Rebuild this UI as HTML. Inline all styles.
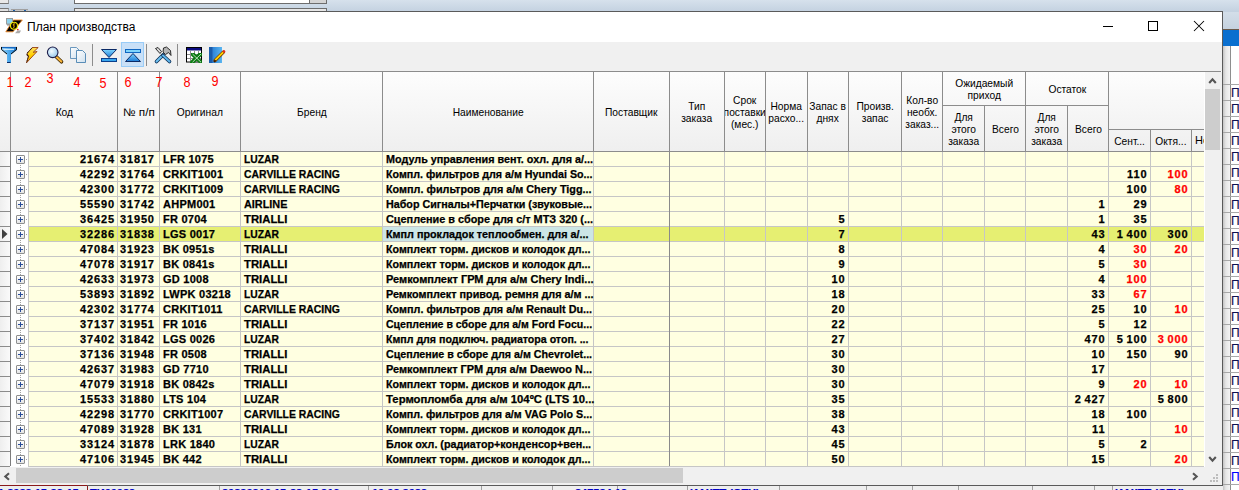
<!DOCTYPE html><html><head><meta charset="utf-8"><style>
*{margin:0;padding:0;box-sizing:border-box}
html,body{width:1239px;height:490px;overflow:hidden;background:#f0f0f0;font-family:"Liberation Sans",sans-serif}
.ab{position:absolute}
.t{position:absolute;white-space:pre;font-size:11px;line-height:14px;color:#000}
.b{font-weight:bold;-webkit-text-stroke:0.25px currentColor}
.hd{position:absolute;white-space:pre;font-size:11px;line-height:12px;color:#000;text-align:center;overflow:hidden;display:flex;align-items:center;justify-content:center}
.red{color:#ff0000}

</style></head><body>
<div class="ab" style="left:0;top:0;width:1239px;height:12px;background:linear-gradient(#d6e1ec,#c3d1e0)"></div>
<div class="ab" style="left:0;top:0;width:9px;height:4px;background:#e8e8e8;border-bottom:1px solid #777;border-right:1px solid #999"></div>
<div class="ab" style="left:0;top:8px;width:9px;height:4px;background:#e0e0e0;border-top:1px solid #777;border-right:1px solid #999"></div>
<div class="ab" style="left:74px;top:0;width:236px;height:4px;background:#fff;border:1px solid #6d6d6d;border-top:0"></div>
<div class="ab" style="left:310px;top:0;width:17px;height:4px;background:#d4d4d4;border-bottom:1px solid #6d6d6d;border-right:1px solid #6d6d6d"></div>
<div class="ab" style="left:74px;top:8px;width:253px;height:4px;background:#e6e6e6;border:1px solid #6d6d6d;border-bottom:0"></div>
<div class="ab" style="left:11px;top:9px;width:17px;height:3px;background:#c8c8c8;border-top:1px solid #a0a0a0"></div>
<div class="ab" style="left:13px;top:10px;width:2px;height:2px;background:#1d5fa8"></div>
<div class="ab" style="left:24px;top:10px;width:2px;height:2px;background:#1d5fa8"></div>
<div class="ab" style="left:1223px;top:12px;width:16px;height:478px;background:#f0f0f0"></div>
<div class="ab" style="left:1223px;top:12px;width:16px;height:17px;background:linear-gradient(#d3dee9,#c5d2df)"></div>
<div class="ab" style="left:1223px;top:29px;width:16px;height:1px;background:#6b5a4a"></div>
<div class="ab" style="left:1223px;top:30px;width:16px;height:16px;background:#0a6fcf"></div>
<div class="ab" style="left:1223px;top:46px;width:7px;height:444px;background:linear-gradient(90deg,#c4c4c4,#e6e6e6 40%,#f4f4f4)"></div>
<div class="ab" style="left:1230px;top:46px;width:1px;height:444px;background:#8e8e8e"></div>
<div class="ab" style="left:1231px;top:46px;width:8px;height:444px;background:#fff"></div>
<div class="ab" style="left:1223px;top:84px;width:16px;height:1px;background:#a8a8a8"></div>
<div class="t" style="left:1231px;top:85px;font-size:12px;line-height:16px;color:#101050;-webkit-text-stroke:0.2px #101050">П</div>
<div class="ab" style="left:1223px;top:100px;width:16px;height:1px;background:#a8a8a8"></div>
<div class="t" style="left:1231px;top:101px;font-size:12px;line-height:16px;color:#101050;-webkit-text-stroke:0.2px #101050">П</div>
<div class="ab" style="left:1223px;top:116px;width:16px;height:1px;background:#a8a8a8"></div>
<div class="t" style="left:1231px;top:117px;font-size:12px;line-height:16px;color:#101050;-webkit-text-stroke:0.2px #101050">П</div>
<div class="ab" style="left:1223px;top:132px;width:16px;height:1px;background:#a8a8a8"></div>
<div class="t" style="left:1231px;top:133px;font-size:12px;line-height:16px;color:#101050;-webkit-text-stroke:0.2px #101050">П</div>
<div class="ab" style="left:1223px;top:148px;width:16px;height:1px;background:#a8a8a8"></div>
<div class="t" style="left:1231px;top:149px;font-size:12px;line-height:16px;color:#101050;-webkit-text-stroke:0.2px #101050">П</div>
<div class="ab" style="left:1223px;top:164px;width:16px;height:1px;background:#a8a8a8"></div>
<div class="t" style="left:1231px;top:165px;font-size:12px;line-height:16px;color:#101050;-webkit-text-stroke:0.2px #101050">П</div>
<div class="ab" style="left:1223px;top:180px;width:16px;height:1px;background:#a8a8a8"></div>
<div class="t" style="left:1231px;top:181px;font-size:12px;line-height:16px;color:#101050;-webkit-text-stroke:0.2px #101050">П</div>
<div class="ab" style="left:1223px;top:196px;width:16px;height:1px;background:#a8a8a8"></div>
<div class="t" style="left:1231px;top:197px;font-size:12px;line-height:16px;color:#101050;-webkit-text-stroke:0.2px #101050">П</div>
<div class="ab" style="left:1223px;top:212px;width:16px;height:1px;background:#a8a8a8"></div>
<div class="t" style="left:1231px;top:213px;font-size:12px;line-height:16px;color:#101050;-webkit-text-stroke:0.2px #101050">П</div>
<div class="ab" style="left:1223px;top:228px;width:16px;height:1px;background:#a8a8a8"></div>
<div class="t" style="left:1231px;top:229px;font-size:12px;line-height:16px;color:#101050;-webkit-text-stroke:0.2px #101050">П</div>
<div class="ab" style="left:1223px;top:244px;width:16px;height:1px;background:#a8a8a8"></div>
<div class="t" style="left:1231px;top:245px;font-size:12px;line-height:16px;color:#101050;-webkit-text-stroke:0.2px #101050">П</div>
<div class="ab" style="left:1223px;top:260px;width:16px;height:1px;background:#a8a8a8"></div>
<div class="t" style="left:1231px;top:261px;font-size:12px;line-height:16px;color:#101050;-webkit-text-stroke:0.2px #101050">П</div>
<div class="ab" style="left:1223px;top:276px;width:16px;height:1px;background:#a8a8a8"></div>
<div class="t" style="left:1231px;top:277px;font-size:12px;line-height:16px;color:#101050;-webkit-text-stroke:0.2px #101050">П</div>
<div class="ab" style="left:1223px;top:292px;width:16px;height:1px;background:#a8a8a8"></div>
<div class="t" style="left:1231px;top:293px;font-size:12px;line-height:16px;color:#101050;-webkit-text-stroke:0.2px #101050">П</div>
<div class="ab" style="left:1223px;top:308px;width:16px;height:1px;background:#a8a8a8"></div>
<div class="t" style="left:1231px;top:309px;font-size:12px;line-height:16px;color:#101050;-webkit-text-stroke:0.2px #101050">П</div>
<div class="ab" style="left:1223px;top:324px;width:16px;height:1px;background:#a8a8a8"></div>
<div class="t" style="left:1231px;top:325px;font-size:12px;line-height:16px;color:#101050;-webkit-text-stroke:0.2px #101050">П</div>
<div class="ab" style="left:1223px;top:340px;width:16px;height:1px;background:#a8a8a8"></div>
<div class="t" style="left:1231px;top:341px;font-size:12px;line-height:16px;color:#101050;-webkit-text-stroke:0.2px #101050">П</div>
<div class="ab" style="left:1223px;top:356px;width:16px;height:1px;background:#a8a8a8"></div>
<div class="t" style="left:1231px;top:357px;font-size:12px;line-height:16px;color:#101050;-webkit-text-stroke:0.2px #101050">П</div>
<div class="ab" style="left:1223px;top:372px;width:16px;height:1px;background:#a8a8a8"></div>
<div class="t" style="left:1231px;top:373px;font-size:12px;line-height:16px;color:#101050;-webkit-text-stroke:0.2px #101050">П</div>
<div class="ab" style="left:1223px;top:388px;width:16px;height:1px;background:#a8a8a8"></div>
<div class="t" style="left:1231px;top:389px;font-size:12px;line-height:16px;color:#101050;-webkit-text-stroke:0.2px #101050">П</div>
<div class="ab" style="left:1223px;top:404px;width:16px;height:1px;background:#a8a8a8"></div>
<div class="t" style="left:1231px;top:405px;font-size:12px;line-height:16px;color:#101050;-webkit-text-stroke:0.2px #101050">П</div>
<div class="ab" style="left:1223px;top:420px;width:16px;height:1px;background:#a8a8a8"></div>
<div class="t" style="left:1231px;top:421px;font-size:12px;line-height:16px;color:#101050;-webkit-text-stroke:0.2px #101050">П</div>
<div class="ab" style="left:1223px;top:436px;width:16px;height:1px;background:#a8a8a8"></div>
<div class="t" style="left:1231px;top:437px;font-size:12px;line-height:16px;color:#101050;-webkit-text-stroke:0.2px #101050">П</div>
<div class="ab" style="left:1223px;top:452px;width:16px;height:1px;background:#a8a8a8"></div>
<div class="t" style="left:1231px;top:453px;font-size:12px;line-height:16px;color:#101050;-webkit-text-stroke:0.2px #101050">П</div>
<div class="ab" style="left:1223px;top:468px;width:16px;height:1px;background:#a8a8a8"></div>
<div class="t" style="left:1231px;top:469px;font-size:12px;line-height:16px;color:#0000ff;-webkit-text-stroke:0.2px #0000ff">П</div>
<div class="ab" style="left:1223px;top:484px;width:16px;height:1px;background:#a8a8a8"></div>
<div class="ab" style="left:0;top:485px;width:1223px;height:5px;background:#eeeeee"></div>
<div class="ab" style="left:87px;top:486px;width:1px;height:4px;background:#a0a0a0"></div>
<div class="ab" style="left:219px;top:486px;width:1px;height:4px;background:#a0a0a0"></div>
<div class="ab" style="left:368px;top:486px;width:1px;height:4px;background:#a0a0a0"></div>
<div class="ab" style="left:481px;top:486px;width:1px;height:4px;background:#a0a0a0"></div>
<div class="ab" style="left:552px;top:486px;width:1px;height:4px;background:#a0a0a0"></div>
<div class="ab" style="left:617px;top:486px;width:1px;height:4px;background:#a0a0a0"></div>
<div class="ab" style="left:687px;top:486px;width:1px;height:4px;background:#a0a0a0"></div>
<div class="ab" style="left:779px;top:486px;width:1px;height:4px;background:#a0a0a0"></div>
<div class="ab" style="left:866px;top:486px;width:1px;height:4px;background:#a0a0a0"></div>
<div class="ab" style="left:912px;top:486px;width:1px;height:4px;background:#a0a0a0"></div>
<div class="ab" style="left:958px;top:486px;width:1px;height:4px;background:#a0a0a0"></div>
<div class="ab" style="left:1032px;top:486px;width:1px;height:4px;background:#a0a0a0"></div>
<div class="ab" style="left:1094px;top:486px;width:1px;height:4px;background:#a0a0a0"></div>
<div class="ab" style="left:1112px;top:486px;width:1px;height:4px;background:#a0a0a0"></div>
<div class="ab" style="left:87px;top:485px;width:1px;height:5px;background:#8a1a1a"></div>
<div class="t b" style="left:-2px;top:486px;font-size:11px;line-height:14px;color:#0000c8">1.2023 15:23:15</div>
<div class="t b" style="left:90px;top:486px;font-size:11px;line-height:14px;color:#0000c8">ТИ00023</div>
<div class="t b" style="left:222px;top:486px;font-size:11px;line-height:14px;color:#0000c8">20230316 15:22:15 316</div>
<div class="t b" style="left:372px;top:486px;font-size:11px;line-height:14px;color:#0000c8">10.03.2023</div>
<div class="t b" style="left:575px;top:486px;font-size:11px;line-height:14px;color:#0000c8">247584.13</div>
<div class="t b" style="left:690px;top:486px;font-size:11px;line-height:14px;color:#0000c8">ИАКТТ (ОТЧ)</div>
<div class="t b" style="left:1115px;top:486px;font-size:11px;line-height:14px;color:#0000c8">ИАКТТ (ОТЧ)</div>
<div class="ab" style="left:0;top:485px;width:1223px;height:1px;background:#6a6a6a"></div>
<div class="ab" style="left:0;top:485px;width:87px;height:1px;background:#8a1a1a"></div>
<div class="ab" style="left:0;top:11px;width:1223px;height:475px;background:#fff;border:1px solid #5a5a5a;border-left:0"></div>
<div class="ab" style="left:0;top:485px;width:87px;height:1px;background:#8a1a1a"></div>
<div class="t" style="left:27px;top:19px;font-size:12px;line-height:16px;color:#000">План производства</div>
<div class="ab" style="left:1103px;top:26px;width:10px;height:1px;background:#000"></div>
<div class="ab" style="left:1148px;top:21px;width:10px;height:10px;border:1px solid #000"></div>
<svg class="ab" style="left:1193px;top:20px" width="12" height="12" viewBox="0 0 12 12"><path d="M1 1L11 11M11 1L1 11" stroke="#000" stroke-width="1.05"/></svg>
<div class="ab" style="left:0;top:42px;width:1222px;height:29px;background:#f0f0f0"></div>
<div class="ab" style="left:92px;top:44px;width:1px;height:22px;background:#8c8c8c"></div>
<div class="ab" style="left:146px;top:44px;width:1px;height:22px;background:#8c8c8c"></div>
<div class="ab" style="left:177px;top:44px;width:1px;height:22px;background:#8c8c8c"></div>
<div class="ab" style="left:121px;top:42px;width:23px;height:25px;background:#c9e0f7;border:1px solid #99ccf7"></div>

<svg class="ab" style="left:0;top:44px" width="230" height="22" viewBox="0 44 230 22">
 <defs>
  <linearGradient id="gb" x1="0" y1="0" x2="1" y2="0"><stop offset="0" stop-color="#9fd6fb"/><stop offset="0.5" stop-color="#4aa8ec"/><stop offset="1" stop-color="#1b73c9"/></linearGradient>
  <linearGradient id="gy" x1="0" y1="0" x2="0" y2="1"><stop offset="0" stop-color="#ffe060"/><stop offset="0.5" stop-color="#ffd000"/><stop offset="1" stop-color="#f0a000"/></linearGradient>
  <radialGradient id="gl" cx="0.4" cy="0.4" r="0.6"><stop offset="0" stop-color="#f4fbff"/><stop offset="1" stop-color="#9ccbec"/></radialGradient>
  <linearGradient id="gp" x1="0" y1="0" x2="1" y2="1"><stop offset="0" stop-color="#ffffff"/><stop offset="1" stop-color="#cfe0ee"/></linearGradient>
  <linearGradient id="gt" x1="0" y1="0" x2="0" y2="1"><stop offset="0" stop-color="#7fd6ff"/><stop offset="1" stop-color="#1b7ad6"/></linearGradient>
  <linearGradient id="gbk" x1="0" y1="0" x2="1" y2="0"><stop offset="0" stop-color="#1a5fb4"/><stop offset="0.3" stop-color="#2f86d8"/><stop offset="1" stop-color="#5ab5f0"/></linearGradient>
 </defs>
 <!-- funnel -->
 <path d="M1 47 H17 V50 L11 54.5 V63 H7 V54.5 L1 50 Z" fill="url(#gb)"/>
 <path d="M1 47.5 H17" stroke="#1466c0" stroke-width="1.2"/>
 <path d="M1.5 47 V49.5 L7 54 M16.5 47 V49.5 L11 54" fill="none" stroke="#0a0a0a" stroke-width="1"/>
 <path d="M3.5 49.3 H14" stroke="#eaf7ff" stroke-width="1"/>
 <path d="M7 62.5 H10.5" stroke="#0b2a66" stroke-width="1"/>
 <!-- lightning -->
 <path d="M32.3 47.5 H38.2 L33.2 52.3 L37 51.5 L26.5 62.8 L28.6 55.8 L27 55.5 L27.3 53 Z" fill="url(#gy)" stroke="#8a2a00" stroke-width="0.8" stroke-linejoin="round"/>
 <path d="M32.3 47.8 L27.3 53 L27 55.5 L28.6 55.8 L26.6 62.5" fill="none" stroke="#111" stroke-width="1" stroke-dasharray="1.2 0.8"/>
 <!-- magnifier -->
 <path d="M56.5 57 L61.5 61.8" stroke="#3a2400" stroke-width="3.6" stroke-linecap="round"/>
 <path d="M56.5 57 L61.3 61.5" stroke="#f9b53a" stroke-width="2.2" stroke-linecap="round"/>
 <circle cx="52.7" cy="52.3" r="5.3" fill="url(#gl)" stroke="#1d1d4a" stroke-width="1.1"/>
 <!-- copy -->
 <path d="M70.5 47.5 H76.5 L79.5 50.5 V58.5 H70.5 Z" fill="url(#gp)" stroke="#5b8db8" stroke-width="0.9"/>
 <path d="M76.5 50.5 H82.5 L85.5 53.5 V62.5 H76.5 Z" fill="url(#gp)" stroke="#4a82b0" stroke-width="0.9"/>
 <!-- collapse (down) -->
 <path d="M101.5 49.5 H116.5 L109 57.5 Z" fill="url(#gt)" stroke="#0b2a66" stroke-width="1" stroke-linejoin="round"/>
 <rect x="101.5" y="58.5" width="15" height="3" fill="#39a6ee" stroke="#0b3f8c" stroke-width="1"/>
 <!-- expand (up) -->
 <rect x="125.5" y="49.5" width="15" height="3" fill="#7fd4fb" stroke="#1166c0" stroke-width="1"/>
 <path d="M125.5 61.5 H140.5 L133 53.5 Z" fill="url(#gt)" stroke="#0b2a66" stroke-width="1" stroke-linejoin="round"/>
 <!-- tools -->
 <path d="M155.5 48.5 L158 47.5 L161.5 51.5 L160 53.5 Z" fill="#d8d8d8" stroke="#1a1a1a" stroke-width="0.9" stroke-linejoin="round"/>
 <path d="M163.5 48 L166.5 47 L170.5 50.5 L171 55.5 L168.5 52.5 L165.5 54.5 L163 52 Z" fill="#b4b4b4" stroke="#1a1a1a" stroke-width="0.9" stroke-linejoin="round"/>
 <path d="M156.5 61.5 L163 55" stroke="#0d2f57" stroke-width="3.6" stroke-linecap="round"/>
 <path d="M156.5 61.5 L163 55" stroke="#6ec3f2" stroke-width="2" stroke-linecap="round"/>
 <path d="M163 55.5 L169.5 61.5" stroke="#0d2f57" stroke-width="3.6" stroke-linecap="round"/>
 <path d="M163 55.5 L169.5 61.5" stroke="#5fb6ec" stroke-width="2" stroke-linecap="round"/>
 <!-- excel grid -->
 <rect x="186.5" y="47.5" width="15" height="14.5" fill="#fff" stroke="#000" stroke-width="1"/>
 <rect x="187" y="48" width="14" height="2.5" fill="#0a0a80"/>
 <path d="M187 54.5 H201 M187 58.5 H201 M190.5 50.5 V62 M194.5 50.5 V62 M198.5 50.5 V62" stroke="#8c8c8c" stroke-width="1"/>
 <path d="M191 53 L194.5 53 L202 60.5 L202 63 L199 63 L191 55.5 Z" fill="#0b7a12"/>
 <path d="M202 53 L202 55.5 L194.5 63 L190 63 L190 61.5 L198.5 53 Z" fill="#0b7a12"/>
 <path d="M192.5 54 L201 62.2 M201 54 L192.5 62.2" stroke="#e6f5e6" stroke-width="0.8"/>
 <!-- notebook -->
 <rect x="209" y="47" width="13" height="16" fill="url(#gbk)"/>
 <rect x="209" y="47" width="3" height="16" fill="#1a5cab"/>
 <rect x="212" y="47" width="1" height="16" fill="#2a6fc0"/>
 <path d="M215 60.5 L223.5 52" stroke="#7a3d00" stroke-width="3.2" stroke-linecap="round"/>
 <path d="M215.2 60.2 L223.3 52.2" stroke="#ffd400" stroke-width="1.8"/>
 <circle cx="224" cy="51.5" r="1.3" fill="#e82a1a"/>
 <path d="M214 62 L215.5 60.3" stroke="#3a1a00" stroke-width="1.4"/>
</svg>

<svg class="ab" style="left:4px;top:16px" width="20" height="20" viewBox="4 16 20 20">
 <path d="M13.3 20 L22.3 20 L13 31.8 L5.8 31.8 Z" fill="#000" stroke="#f08a2a" stroke-width="0.9" stroke-linejoin="round"/>
 <rect x="6.5" y="18.5" width="6" height="5.5" fill="#8fd3ee" stroke="#9a9a9a" stroke-width="1"/>
 <rect x="7" y="24.3" width="5" height="1.2" fill="#8a8a8a"/>
 <circle cx="14" cy="25.8" r="3.5" fill="#000" stroke="#f5ea00" stroke-width="1.1"/>
 <path d="M15.2 24 Q13.2 23.4 13.3 25 Q15 26 13.4 27.8" stroke="#e0a000" stroke-width="1.1" fill="none"/>
 <circle cx="17.8" cy="29.6" r="0.9" fill="#e22"/>
 <path d="M15 33.2 L17.5 30.6 H21 L19.5 33.2 Z" fill="#a8a8a8"/>
</svg>
<div class="ab" style="left:0;top:71px;width:1221px;height:1px;background:#8c8c8c"></div>
<div class="ab" style="left:0;top:72px;width:1204px;height:79px;background:linear-gradient(#fdfdfd,#efefef)"></div>
<div class="ab" style="left:0;top:151px;width:1204px;height:1px;background:#8c8c8c"></div>
<div class="ab" style="left:10px;top:72px;width:1px;height:79px;background:#8c8c8c"></div>
<div class="ab" style="left:117px;top:72px;width:1px;height:79px;background:#8c8c8c"></div>
<div class="ab" style="left:159px;top:72px;width:1px;height:79px;background:#8c8c8c"></div>
<div class="ab" style="left:240px;top:72px;width:1px;height:79px;background:#8c8c8c"></div>
<div class="ab" style="left:382px;top:72px;width:1px;height:79px;background:#8c8c8c"></div>
<div class="ab" style="left:593px;top:72px;width:1px;height:79px;background:#8c8c8c"></div>
<div class="ab" style="left:669px;top:72px;width:1px;height:79px;background:#8c8c8c"></div>
<div class="ab" style="left:724px;top:72px;width:1px;height:79px;background:#8c8c8c"></div>
<div class="ab" style="left:765px;top:72px;width:1px;height:79px;background:#8c8c8c"></div>
<div class="ab" style="left:807px;top:72px;width:1px;height:79px;background:#8c8c8c"></div>
<div class="ab" style="left:848px;top:72px;width:1px;height:79px;background:#8c8c8c"></div>
<div class="ab" style="left:901px;top:72px;width:1px;height:79px;background:#8c8c8c"></div>
<div class="ab" style="left:942px;top:72px;width:1px;height:79px;background:#8c8c8c"></div>
<div class="ab" style="left:1025px;top:72px;width:1px;height:79px;background:#8c8c8c"></div>
<div class="ab" style="left:1108px;top:72px;width:1px;height:79px;background:#8c8c8c"></div>
<div class="ab" style="left:984px;top:106px;width:1px;height:45px;background:#8c8c8c"></div>
<div class="ab" style="left:1067px;top:106px;width:1px;height:45px;background:#8c8c8c"></div>
<div class="ab" style="left:1150px;top:130px;width:1px;height:21px;background:#8c8c8c"></div>
<div class="ab" style="left:1191px;top:130px;width:1px;height:21px;background:#8c8c8c"></div>
<div class="ab" style="left:943px;top:105px;width:165px;height:1px;background:#8c8c8c"></div>
<div class="ab" style="left:1109px;top:129px;width:95px;height:1px;background:#8c8c8c"></div>
<div class="hd" style="left:11px;top:72px;width:106px;height:79px"><span style="display:inline-block;transform:scaleX(0.93)">Код</span></div>
<div class="hd" style="left:118px;top:72px;width:41px;height:79px"><span style="display:inline-block;transform:scaleX(1.07)">№ п/п</span></div>
<div class="hd" style="left:160px;top:72px;width:80px;height:79px"><span style="display:inline-block;transform:scaleX(0.93)">Оригинал</span></div>
<div class="hd" style="left:241px;top:72px;width:141px;height:79px"><span style="display:inline-block;transform:scaleX(0.93)">Бренд</span></div>
<div class="hd" style="left:383px;top:72px;width:210px;height:79px"><span style="display:inline-block;transform:scaleX(0.93)">Наименование</span></div>
<div class="hd" style="left:594px;top:72px;width:75px;height:79px"><span style="display:inline-block;transform:scaleX(0.93)">Поставщик</span></div>
<div class="hd" style="left:670px;top:72px;width:54px;height:79px"><span style="display:inline-block;transform:scaleX(0.93)">Тип
заказа</span></div>
<div class="hd" style="left:725px;top:72px;width:40px;height:79px"><span style="display:inline-block;transform:scaleX(0.93)">Срок
поставки
(мес.)</span></div>
<div class="hd" style="left:766px;top:72px;width:41px;height:79px"><span style="display:inline-block;transform:scaleX(0.93)">Норма
расхо...</span></div>
<div class="hd" style="left:808px;top:72px;width:40px;height:79px"><span style="display:inline-block;transform:scaleX(0.93)">Запас в
днях</span></div>
<div class="hd" style="left:849px;top:72px;width:52px;height:79px"><span style="display:inline-block;transform:scaleX(0.93)">Произв.
запас</span></div>
<div class="hd" style="left:902px;top:72px;width:40px;height:79px"><span style="display:inline-block;transform:scaleX(0.93)">Кол-во
необх.
заказ...</span></div>
<div class="hd" style="left:943px;top:72px;width:82px;height:33px"><span style="display:inline-block;transform:scaleX(0.93)">Ожидаемый
приход</span></div>
<div class="hd" style="left:1026px;top:72px;width:82px;height:33px"><span style="display:inline-block;transform:scaleX(0.93)">Остаток</span></div>
<div class="hd" style="left:943px;top:106px;width:41px;height:45px"><span style="display:inline-block;transform:scaleX(0.93)">Для
этого
заказа</span></div>
<div class="hd" style="left:985px;top:106px;width:40px;height:45px"><span style="display:inline-block;transform:scaleX(0.93)">Всего</span></div>
<div class="hd" style="left:1026px;top:106px;width:41px;height:45px"><span style="display:inline-block;transform:scaleX(0.93)">Для
этого
заказа</span></div>
<div class="hd" style="left:1068px;top:106px;width:40px;height:45px"><span style="display:inline-block;transform:scaleX(0.93)">Всего</span></div>
<div class="hd" style="left:1109px;top:130px;width:41px;height:21px"><span style="display:inline-block;transform:scaleX(0.93)">Сент...</span></div>
<div class="hd" style="left:1151px;top:130px;width:40px;height:21px"><span style="display:inline-block;transform:scaleX(0.93)">Октя...</span></div>
<div class="t" style="left:1195px;top:133px;width:9px;overflow:hidden">Но</div>
<div class="t" style="left:4.4px;width:12px;text-align:center;top:74px;font-size:14px;line-height:16px;color:#ff0000;transform:scaleX(0.9)">1</div>
<div class="t" style="left:22.1px;width:12px;text-align:center;top:74px;font-size:14px;line-height:16px;color:#ff0000;transform:scaleX(0.9)">2</div>
<div class="t" style="left:44.1px;width:12px;text-align:center;top:70px;font-size:14px;line-height:16px;color:#ff0000;transform:scaleX(0.9)">3</div>
<div class="t" style="left:70.7px;width:12px;text-align:center;top:74px;font-size:14px;line-height:16px;color:#ff0000;transform:scaleX(0.9)">4</div>
<div class="t" style="left:96.7px;width:12px;text-align:center;top:75px;font-size:14px;line-height:16px;color:#ff0000;transform:scaleX(0.9)">5</div>
<div class="t" style="left:121.7px;width:12px;text-align:center;top:74px;font-size:14px;line-height:16px;color:#ff0000;transform:scaleX(0.9)">6</div>
<div class="t" style="left:152.7px;width:12px;text-align:center;top:74px;font-size:14px;line-height:16px;color:#ff0000;transform:scaleX(0.9)">7</div>
<div class="t" style="left:181.0px;width:12px;text-align:center;top:74px;font-size:14px;line-height:16px;color:#ff0000;transform:scaleX(0.9)">8</div>
<div class="t" style="left:208.8px;width:12px;text-align:center;top:73px;font-size:14px;line-height:16px;color:#ff0000;transform:scaleX(0.9)">9</div>
<div class="ab" style="left:29px;top:152px;width:1175px;height:314px;background:#ffffe1"></div>
<div class="ab" style="left:11px;top:152px;width:17px;height:315px;background:#fff"></div>
<div class="ab" style="left:29px;top:227px;width:1175px;height:14px;background:#e6ef72"></div>
<div class="ab" style="left:383px;top:227px;width:210px;height:14px;background:#cce6e6"></div>
<div class="ab" style="left:0;top:152px;width:10px;height:14px;background:linear-gradient(90deg,#eeeeee,#fafafa)"></div>
<div class="ab" style="left:0px;top:166px;width:10px;height:1px;background:#8c8c8c"></div>
<div class="ab" style="left:28px;top:166px;width:1176px;height:1px;background:#c6c6c6"></div>
<div class="ab" style="left:16px;top:155px;width:9px;height:9px;border:1px solid #8e8f8f;border-radius:1px;background:linear-gradient(#ffffff,#e4e4e4)"></div>
<div class="ab" style="left:18px;top:159px;width:5px;height:1px;background:#2a4d9a"></div>
<div class="ab" style="left:20px;top:157px;width:1px;height:5px;background:#2a4d9a"></div>
<div class="ab" style="left:26px;top:159px;width:1px;height:1px;background:#a0a0a0"></div>
<div class="ab" style="left:0;top:167px;width:10px;height:14px;background:linear-gradient(90deg,#eeeeee,#fafafa)"></div>
<div class="ab" style="left:0px;top:181px;width:10px;height:1px;background:#8c8c8c"></div>
<div class="ab" style="left:28px;top:181px;width:1176px;height:1px;background:#c6c6c6"></div>
<div class="ab" style="left:16px;top:170px;width:9px;height:9px;border:1px solid #8e8f8f;border-radius:1px;background:linear-gradient(#ffffff,#e4e4e4)"></div>
<div class="ab" style="left:18px;top:174px;width:5px;height:1px;background:#2a4d9a"></div>
<div class="ab" style="left:20px;top:172px;width:1px;height:5px;background:#2a4d9a"></div>
<div class="ab" style="left:26px;top:174px;width:1px;height:1px;background:#a0a0a0"></div>
<div class="ab" style="left:20px;top:165px;width:1px;height:1px;background:#a0a0a0"></div>
<div class="ab" style="left:20px;top:167px;width:1px;height:1px;background:#a0a0a0"></div>
<div class="ab" style="left:20px;top:169px;width:1px;height:1px;background:#a0a0a0"></div>
<div class="ab" style="left:0;top:182px;width:10px;height:14px;background:linear-gradient(90deg,#eeeeee,#fafafa)"></div>
<div class="ab" style="left:0px;top:196px;width:10px;height:1px;background:#8c8c8c"></div>
<div class="ab" style="left:28px;top:196px;width:1176px;height:1px;background:#c6c6c6"></div>
<div class="ab" style="left:16px;top:185px;width:9px;height:9px;border:1px solid #8e8f8f;border-radius:1px;background:linear-gradient(#ffffff,#e4e4e4)"></div>
<div class="ab" style="left:18px;top:189px;width:5px;height:1px;background:#2a4d9a"></div>
<div class="ab" style="left:20px;top:187px;width:1px;height:5px;background:#2a4d9a"></div>
<div class="ab" style="left:26px;top:189px;width:1px;height:1px;background:#a0a0a0"></div>
<div class="ab" style="left:20px;top:180px;width:1px;height:1px;background:#a0a0a0"></div>
<div class="ab" style="left:20px;top:182px;width:1px;height:1px;background:#a0a0a0"></div>
<div class="ab" style="left:20px;top:184px;width:1px;height:1px;background:#a0a0a0"></div>
<div class="ab" style="left:0;top:197px;width:10px;height:14px;background:linear-gradient(90deg,#eeeeee,#fafafa)"></div>
<div class="ab" style="left:0px;top:211px;width:10px;height:1px;background:#8c8c8c"></div>
<div class="ab" style="left:28px;top:211px;width:1176px;height:1px;background:#c6c6c6"></div>
<div class="ab" style="left:16px;top:200px;width:9px;height:9px;border:1px solid #8e8f8f;border-radius:1px;background:linear-gradient(#ffffff,#e4e4e4)"></div>
<div class="ab" style="left:18px;top:204px;width:5px;height:1px;background:#2a4d9a"></div>
<div class="ab" style="left:20px;top:202px;width:1px;height:5px;background:#2a4d9a"></div>
<div class="ab" style="left:26px;top:204px;width:1px;height:1px;background:#a0a0a0"></div>
<div class="ab" style="left:20px;top:195px;width:1px;height:1px;background:#a0a0a0"></div>
<div class="ab" style="left:20px;top:197px;width:1px;height:1px;background:#a0a0a0"></div>
<div class="ab" style="left:20px;top:199px;width:1px;height:1px;background:#a0a0a0"></div>
<div class="ab" style="left:0;top:212px;width:10px;height:14px;background:linear-gradient(90deg,#eeeeee,#fafafa)"></div>
<div class="ab" style="left:0px;top:226px;width:10px;height:1px;background:#8c8c8c"></div>
<div class="ab" style="left:28px;top:226px;width:1176px;height:1px;background:#c6c6c6"></div>
<div class="ab" style="left:16px;top:215px;width:9px;height:9px;border:1px solid #8e8f8f;border-radius:1px;background:linear-gradient(#ffffff,#e4e4e4)"></div>
<div class="ab" style="left:18px;top:219px;width:5px;height:1px;background:#2a4d9a"></div>
<div class="ab" style="left:20px;top:217px;width:1px;height:5px;background:#2a4d9a"></div>
<div class="ab" style="left:26px;top:219px;width:1px;height:1px;background:#a0a0a0"></div>
<div class="ab" style="left:20px;top:210px;width:1px;height:1px;background:#a0a0a0"></div>
<div class="ab" style="left:20px;top:212px;width:1px;height:1px;background:#a0a0a0"></div>
<div class="ab" style="left:20px;top:214px;width:1px;height:1px;background:#a0a0a0"></div>
<div class="ab" style="left:0;top:227px;width:10px;height:14px;background:linear-gradient(90deg,#eeeeee,#fafafa)"></div>
<div class="ab" style="left:0px;top:241px;width:10px;height:1px;background:#8c8c8c"></div>
<div class="ab" style="left:28px;top:241px;width:1176px;height:1px;background:#c6c6c6"></div>
<div class="ab" style="left:16px;top:230px;width:9px;height:9px;border:1px solid #8e8f8f;border-radius:1px;background:linear-gradient(#ffffff,#e4e4e4)"></div>
<div class="ab" style="left:18px;top:234px;width:5px;height:1px;background:#2a4d9a"></div>
<div class="ab" style="left:20px;top:232px;width:1px;height:5px;background:#2a4d9a"></div>
<div class="ab" style="left:26px;top:234px;width:1px;height:1px;background:#a0a0a0"></div>
<div class="ab" style="left:20px;top:225px;width:1px;height:1px;background:#a0a0a0"></div>
<div class="ab" style="left:20px;top:227px;width:1px;height:1px;background:#a0a0a0"></div>
<div class="ab" style="left:20px;top:229px;width:1px;height:1px;background:#a0a0a0"></div>
<div class="ab" style="left:0;top:242px;width:10px;height:14px;background:linear-gradient(90deg,#eeeeee,#fafafa)"></div>
<div class="ab" style="left:0px;top:256px;width:10px;height:1px;background:#8c8c8c"></div>
<div class="ab" style="left:28px;top:256px;width:1176px;height:1px;background:#c6c6c6"></div>
<div class="ab" style="left:16px;top:245px;width:9px;height:9px;border:1px solid #8e8f8f;border-radius:1px;background:linear-gradient(#ffffff,#e4e4e4)"></div>
<div class="ab" style="left:18px;top:249px;width:5px;height:1px;background:#2a4d9a"></div>
<div class="ab" style="left:20px;top:247px;width:1px;height:5px;background:#2a4d9a"></div>
<div class="ab" style="left:26px;top:249px;width:1px;height:1px;background:#a0a0a0"></div>
<div class="ab" style="left:20px;top:240px;width:1px;height:1px;background:#a0a0a0"></div>
<div class="ab" style="left:20px;top:242px;width:1px;height:1px;background:#a0a0a0"></div>
<div class="ab" style="left:20px;top:244px;width:1px;height:1px;background:#a0a0a0"></div>
<div class="ab" style="left:0;top:257px;width:10px;height:14px;background:linear-gradient(90deg,#eeeeee,#fafafa)"></div>
<div class="ab" style="left:0px;top:271px;width:10px;height:1px;background:#8c8c8c"></div>
<div class="ab" style="left:28px;top:271px;width:1176px;height:1px;background:#c6c6c6"></div>
<div class="ab" style="left:16px;top:260px;width:9px;height:9px;border:1px solid #8e8f8f;border-radius:1px;background:linear-gradient(#ffffff,#e4e4e4)"></div>
<div class="ab" style="left:18px;top:264px;width:5px;height:1px;background:#2a4d9a"></div>
<div class="ab" style="left:20px;top:262px;width:1px;height:5px;background:#2a4d9a"></div>
<div class="ab" style="left:26px;top:264px;width:1px;height:1px;background:#a0a0a0"></div>
<div class="ab" style="left:20px;top:255px;width:1px;height:1px;background:#a0a0a0"></div>
<div class="ab" style="left:20px;top:257px;width:1px;height:1px;background:#a0a0a0"></div>
<div class="ab" style="left:20px;top:259px;width:1px;height:1px;background:#a0a0a0"></div>
<div class="ab" style="left:0;top:272px;width:10px;height:14px;background:linear-gradient(90deg,#eeeeee,#fafafa)"></div>
<div class="ab" style="left:0px;top:286px;width:10px;height:1px;background:#8c8c8c"></div>
<div class="ab" style="left:28px;top:286px;width:1176px;height:1px;background:#c6c6c6"></div>
<div class="ab" style="left:16px;top:275px;width:9px;height:9px;border:1px solid #8e8f8f;border-radius:1px;background:linear-gradient(#ffffff,#e4e4e4)"></div>
<div class="ab" style="left:18px;top:279px;width:5px;height:1px;background:#2a4d9a"></div>
<div class="ab" style="left:20px;top:277px;width:1px;height:5px;background:#2a4d9a"></div>
<div class="ab" style="left:26px;top:279px;width:1px;height:1px;background:#a0a0a0"></div>
<div class="ab" style="left:20px;top:270px;width:1px;height:1px;background:#a0a0a0"></div>
<div class="ab" style="left:20px;top:272px;width:1px;height:1px;background:#a0a0a0"></div>
<div class="ab" style="left:20px;top:274px;width:1px;height:1px;background:#a0a0a0"></div>
<div class="ab" style="left:0;top:287px;width:10px;height:14px;background:linear-gradient(90deg,#eeeeee,#fafafa)"></div>
<div class="ab" style="left:0px;top:301px;width:10px;height:1px;background:#8c8c8c"></div>
<div class="ab" style="left:28px;top:301px;width:1176px;height:1px;background:#c6c6c6"></div>
<div class="ab" style="left:16px;top:290px;width:9px;height:9px;border:1px solid #8e8f8f;border-radius:1px;background:linear-gradient(#ffffff,#e4e4e4)"></div>
<div class="ab" style="left:18px;top:294px;width:5px;height:1px;background:#2a4d9a"></div>
<div class="ab" style="left:20px;top:292px;width:1px;height:5px;background:#2a4d9a"></div>
<div class="ab" style="left:26px;top:294px;width:1px;height:1px;background:#a0a0a0"></div>
<div class="ab" style="left:20px;top:285px;width:1px;height:1px;background:#a0a0a0"></div>
<div class="ab" style="left:20px;top:287px;width:1px;height:1px;background:#a0a0a0"></div>
<div class="ab" style="left:20px;top:289px;width:1px;height:1px;background:#a0a0a0"></div>
<div class="ab" style="left:0;top:302px;width:10px;height:14px;background:linear-gradient(90deg,#eeeeee,#fafafa)"></div>
<div class="ab" style="left:0px;top:316px;width:10px;height:1px;background:#8c8c8c"></div>
<div class="ab" style="left:28px;top:316px;width:1176px;height:1px;background:#c6c6c6"></div>
<div class="ab" style="left:16px;top:305px;width:9px;height:9px;border:1px solid #8e8f8f;border-radius:1px;background:linear-gradient(#ffffff,#e4e4e4)"></div>
<div class="ab" style="left:18px;top:309px;width:5px;height:1px;background:#2a4d9a"></div>
<div class="ab" style="left:20px;top:307px;width:1px;height:5px;background:#2a4d9a"></div>
<div class="ab" style="left:26px;top:309px;width:1px;height:1px;background:#a0a0a0"></div>
<div class="ab" style="left:20px;top:300px;width:1px;height:1px;background:#a0a0a0"></div>
<div class="ab" style="left:20px;top:302px;width:1px;height:1px;background:#a0a0a0"></div>
<div class="ab" style="left:20px;top:304px;width:1px;height:1px;background:#a0a0a0"></div>
<div class="ab" style="left:0;top:317px;width:10px;height:14px;background:linear-gradient(90deg,#eeeeee,#fafafa)"></div>
<div class="ab" style="left:0px;top:331px;width:10px;height:1px;background:#8c8c8c"></div>
<div class="ab" style="left:28px;top:331px;width:1176px;height:1px;background:#c6c6c6"></div>
<div class="ab" style="left:16px;top:320px;width:9px;height:9px;border:1px solid #8e8f8f;border-radius:1px;background:linear-gradient(#ffffff,#e4e4e4)"></div>
<div class="ab" style="left:18px;top:324px;width:5px;height:1px;background:#2a4d9a"></div>
<div class="ab" style="left:20px;top:322px;width:1px;height:5px;background:#2a4d9a"></div>
<div class="ab" style="left:26px;top:324px;width:1px;height:1px;background:#a0a0a0"></div>
<div class="ab" style="left:20px;top:315px;width:1px;height:1px;background:#a0a0a0"></div>
<div class="ab" style="left:20px;top:317px;width:1px;height:1px;background:#a0a0a0"></div>
<div class="ab" style="left:20px;top:319px;width:1px;height:1px;background:#a0a0a0"></div>
<div class="ab" style="left:0;top:332px;width:10px;height:14px;background:linear-gradient(90deg,#eeeeee,#fafafa)"></div>
<div class="ab" style="left:0px;top:346px;width:10px;height:1px;background:#8c8c8c"></div>
<div class="ab" style="left:28px;top:346px;width:1176px;height:1px;background:#c6c6c6"></div>
<div class="ab" style="left:16px;top:335px;width:9px;height:9px;border:1px solid #8e8f8f;border-radius:1px;background:linear-gradient(#ffffff,#e4e4e4)"></div>
<div class="ab" style="left:18px;top:339px;width:5px;height:1px;background:#2a4d9a"></div>
<div class="ab" style="left:20px;top:337px;width:1px;height:5px;background:#2a4d9a"></div>
<div class="ab" style="left:26px;top:339px;width:1px;height:1px;background:#a0a0a0"></div>
<div class="ab" style="left:20px;top:330px;width:1px;height:1px;background:#a0a0a0"></div>
<div class="ab" style="left:20px;top:332px;width:1px;height:1px;background:#a0a0a0"></div>
<div class="ab" style="left:20px;top:334px;width:1px;height:1px;background:#a0a0a0"></div>
<div class="ab" style="left:0;top:347px;width:10px;height:14px;background:linear-gradient(90deg,#eeeeee,#fafafa)"></div>
<div class="ab" style="left:0px;top:361px;width:10px;height:1px;background:#8c8c8c"></div>
<div class="ab" style="left:28px;top:361px;width:1176px;height:1px;background:#c6c6c6"></div>
<div class="ab" style="left:16px;top:350px;width:9px;height:9px;border:1px solid #8e8f8f;border-radius:1px;background:linear-gradient(#ffffff,#e4e4e4)"></div>
<div class="ab" style="left:18px;top:354px;width:5px;height:1px;background:#2a4d9a"></div>
<div class="ab" style="left:20px;top:352px;width:1px;height:5px;background:#2a4d9a"></div>
<div class="ab" style="left:26px;top:354px;width:1px;height:1px;background:#a0a0a0"></div>
<div class="ab" style="left:20px;top:345px;width:1px;height:1px;background:#a0a0a0"></div>
<div class="ab" style="left:20px;top:347px;width:1px;height:1px;background:#a0a0a0"></div>
<div class="ab" style="left:20px;top:349px;width:1px;height:1px;background:#a0a0a0"></div>
<div class="ab" style="left:0;top:362px;width:10px;height:14px;background:linear-gradient(90deg,#eeeeee,#fafafa)"></div>
<div class="ab" style="left:0px;top:376px;width:10px;height:1px;background:#8c8c8c"></div>
<div class="ab" style="left:28px;top:376px;width:1176px;height:1px;background:#c6c6c6"></div>
<div class="ab" style="left:16px;top:365px;width:9px;height:9px;border:1px solid #8e8f8f;border-radius:1px;background:linear-gradient(#ffffff,#e4e4e4)"></div>
<div class="ab" style="left:18px;top:369px;width:5px;height:1px;background:#2a4d9a"></div>
<div class="ab" style="left:20px;top:367px;width:1px;height:5px;background:#2a4d9a"></div>
<div class="ab" style="left:26px;top:369px;width:1px;height:1px;background:#a0a0a0"></div>
<div class="ab" style="left:20px;top:360px;width:1px;height:1px;background:#a0a0a0"></div>
<div class="ab" style="left:20px;top:362px;width:1px;height:1px;background:#a0a0a0"></div>
<div class="ab" style="left:20px;top:364px;width:1px;height:1px;background:#a0a0a0"></div>
<div class="ab" style="left:0;top:377px;width:10px;height:14px;background:linear-gradient(90deg,#eeeeee,#fafafa)"></div>
<div class="ab" style="left:0px;top:391px;width:10px;height:1px;background:#8c8c8c"></div>
<div class="ab" style="left:28px;top:391px;width:1176px;height:1px;background:#c6c6c6"></div>
<div class="ab" style="left:16px;top:380px;width:9px;height:9px;border:1px solid #8e8f8f;border-radius:1px;background:linear-gradient(#ffffff,#e4e4e4)"></div>
<div class="ab" style="left:18px;top:384px;width:5px;height:1px;background:#2a4d9a"></div>
<div class="ab" style="left:20px;top:382px;width:1px;height:5px;background:#2a4d9a"></div>
<div class="ab" style="left:26px;top:384px;width:1px;height:1px;background:#a0a0a0"></div>
<div class="ab" style="left:20px;top:375px;width:1px;height:1px;background:#a0a0a0"></div>
<div class="ab" style="left:20px;top:377px;width:1px;height:1px;background:#a0a0a0"></div>
<div class="ab" style="left:20px;top:379px;width:1px;height:1px;background:#a0a0a0"></div>
<div class="ab" style="left:0;top:392px;width:10px;height:14px;background:linear-gradient(90deg,#eeeeee,#fafafa)"></div>
<div class="ab" style="left:0px;top:406px;width:10px;height:1px;background:#8c8c8c"></div>
<div class="ab" style="left:28px;top:406px;width:1176px;height:1px;background:#c6c6c6"></div>
<div class="ab" style="left:16px;top:395px;width:9px;height:9px;border:1px solid #8e8f8f;border-radius:1px;background:linear-gradient(#ffffff,#e4e4e4)"></div>
<div class="ab" style="left:18px;top:399px;width:5px;height:1px;background:#2a4d9a"></div>
<div class="ab" style="left:20px;top:397px;width:1px;height:5px;background:#2a4d9a"></div>
<div class="ab" style="left:26px;top:399px;width:1px;height:1px;background:#a0a0a0"></div>
<div class="ab" style="left:20px;top:390px;width:1px;height:1px;background:#a0a0a0"></div>
<div class="ab" style="left:20px;top:392px;width:1px;height:1px;background:#a0a0a0"></div>
<div class="ab" style="left:20px;top:394px;width:1px;height:1px;background:#a0a0a0"></div>
<div class="ab" style="left:0;top:407px;width:10px;height:14px;background:linear-gradient(90deg,#eeeeee,#fafafa)"></div>
<div class="ab" style="left:0px;top:421px;width:10px;height:1px;background:#8c8c8c"></div>
<div class="ab" style="left:28px;top:421px;width:1176px;height:1px;background:#c6c6c6"></div>
<div class="ab" style="left:16px;top:410px;width:9px;height:9px;border:1px solid #8e8f8f;border-radius:1px;background:linear-gradient(#ffffff,#e4e4e4)"></div>
<div class="ab" style="left:18px;top:414px;width:5px;height:1px;background:#2a4d9a"></div>
<div class="ab" style="left:20px;top:412px;width:1px;height:5px;background:#2a4d9a"></div>
<div class="ab" style="left:26px;top:414px;width:1px;height:1px;background:#a0a0a0"></div>
<div class="ab" style="left:20px;top:405px;width:1px;height:1px;background:#a0a0a0"></div>
<div class="ab" style="left:20px;top:407px;width:1px;height:1px;background:#a0a0a0"></div>
<div class="ab" style="left:20px;top:409px;width:1px;height:1px;background:#a0a0a0"></div>
<div class="ab" style="left:0;top:422px;width:10px;height:14px;background:linear-gradient(90deg,#eeeeee,#fafafa)"></div>
<div class="ab" style="left:0px;top:436px;width:10px;height:1px;background:#8c8c8c"></div>
<div class="ab" style="left:28px;top:436px;width:1176px;height:1px;background:#c6c6c6"></div>
<div class="ab" style="left:16px;top:425px;width:9px;height:9px;border:1px solid #8e8f8f;border-radius:1px;background:linear-gradient(#ffffff,#e4e4e4)"></div>
<div class="ab" style="left:18px;top:429px;width:5px;height:1px;background:#2a4d9a"></div>
<div class="ab" style="left:20px;top:427px;width:1px;height:5px;background:#2a4d9a"></div>
<div class="ab" style="left:26px;top:429px;width:1px;height:1px;background:#a0a0a0"></div>
<div class="ab" style="left:20px;top:420px;width:1px;height:1px;background:#a0a0a0"></div>
<div class="ab" style="left:20px;top:422px;width:1px;height:1px;background:#a0a0a0"></div>
<div class="ab" style="left:20px;top:424px;width:1px;height:1px;background:#a0a0a0"></div>
<div class="ab" style="left:0;top:437px;width:10px;height:14px;background:linear-gradient(90deg,#eeeeee,#fafafa)"></div>
<div class="ab" style="left:0px;top:451px;width:10px;height:1px;background:#8c8c8c"></div>
<div class="ab" style="left:28px;top:451px;width:1176px;height:1px;background:#c6c6c6"></div>
<div class="ab" style="left:16px;top:440px;width:9px;height:9px;border:1px solid #8e8f8f;border-radius:1px;background:linear-gradient(#ffffff,#e4e4e4)"></div>
<div class="ab" style="left:18px;top:444px;width:5px;height:1px;background:#2a4d9a"></div>
<div class="ab" style="left:20px;top:442px;width:1px;height:5px;background:#2a4d9a"></div>
<div class="ab" style="left:26px;top:444px;width:1px;height:1px;background:#a0a0a0"></div>
<div class="ab" style="left:20px;top:435px;width:1px;height:1px;background:#a0a0a0"></div>
<div class="ab" style="left:20px;top:437px;width:1px;height:1px;background:#a0a0a0"></div>
<div class="ab" style="left:20px;top:439px;width:1px;height:1px;background:#a0a0a0"></div>
<div class="ab" style="left:0;top:452px;width:10px;height:14px;background:linear-gradient(90deg,#eeeeee,#fafafa)"></div>
<div class="ab" style="left:0px;top:466px;width:10px;height:1px;background:#8c8c8c"></div>
<div class="ab" style="left:28px;top:466px;width:1176px;height:1px;background:#c6c6c6"></div>
<div class="ab" style="left:16px;top:455px;width:9px;height:9px;border:1px solid #8e8f8f;border-radius:1px;background:linear-gradient(#ffffff,#e4e4e4)"></div>
<div class="ab" style="left:18px;top:459px;width:5px;height:1px;background:#2a4d9a"></div>
<div class="ab" style="left:20px;top:457px;width:1px;height:5px;background:#2a4d9a"></div>
<div class="ab" style="left:26px;top:459px;width:1px;height:1px;background:#a0a0a0"></div>
<div class="ab" style="left:20px;top:450px;width:1px;height:1px;background:#a0a0a0"></div>
<div class="ab" style="left:20px;top:452px;width:1px;height:1px;background:#a0a0a0"></div>
<div class="ab" style="left:20px;top:454px;width:1px;height:1px;background:#a0a0a0"></div>
<div class="ab" style="left:20px;top:465px;width:1px;height:1px;background:#a0a0a0"></div>
<div class="ab" style="left:10px;top:152px;width:1px;height:314px;background:#7c7c7c"></div>
<div class="ab" style="left:28px;top:152px;width:1px;height:314px;background:#c6c6c6"></div>
<div class="ab" style="left:117px;top:152px;width:1px;height:314px;background:#c6c6c6"></div>
<div class="ab" style="left:159px;top:152px;width:1px;height:314px;background:#c6c6c6"></div>
<div class="ab" style="left:240px;top:152px;width:1px;height:314px;background:#c6c6c6"></div>
<div class="ab" style="left:382px;top:152px;width:1px;height:314px;background:#c6c6c6"></div>
<div class="ab" style="left:593px;top:152px;width:1px;height:314px;background:#c6c6c6"></div>
<div class="ab" style="left:724px;top:152px;width:1px;height:314px;background:#c6c6c6"></div>
<div class="ab" style="left:765px;top:152px;width:1px;height:314px;background:#c6c6c6"></div>
<div class="ab" style="left:807px;top:152px;width:1px;height:314px;background:#c6c6c6"></div>
<div class="ab" style="left:848px;top:152px;width:1px;height:314px;background:#c6c6c6"></div>
<div class="ab" style="left:901px;top:152px;width:1px;height:314px;background:#c6c6c6"></div>
<div class="ab" style="left:942px;top:152px;width:1px;height:314px;background:#c6c6c6"></div>
<div class="ab" style="left:984px;top:152px;width:1px;height:314px;background:#c6c6c6"></div>
<div class="ab" style="left:1025px;top:152px;width:1px;height:314px;background:#c6c6c6"></div>
<div class="ab" style="left:1067px;top:152px;width:1px;height:314px;background:#c6c6c6"></div>
<div class="ab" style="left:1108px;top:152px;width:1px;height:314px;background:#c6c6c6"></div>
<div class="ab" style="left:1150px;top:152px;width:1px;height:314px;background:#c6c6c6"></div>
<div class="ab" style="left:1191px;top:152px;width:1px;height:314px;background:#c6c6c6"></div>
<div class="ab" style="left:669px;top:152px;width:1px;height:314px;background:#8a8a8a"></div>
<svg class="ab" style="left:2px;top:229px" width="6" height="10" viewBox="0 0 6 10"><path d="M0 0 L5.5 5 L0 10 Z" fill="#404040"/></svg>
<div class="t b" style="right:1124.15px;top:152px;letter-spacing:0.85px">21674</div>
<div class="t b" style="left:120px;top:152px;letter-spacing:0.85px">31817</div>
<div class="t b" style="left:163px;top:152px;letter-spacing:0.25px">LFR 1075</div>
<div class="t b" style="left:244px;top:152px;transform-origin:0 0;transform:scaleX(0.935)">LUZAR</div>
<div class="t b" style="left:386px;top:152px;transform-origin:0 0;transform:scaleX(0.9808)">Модуль управления вент. охл. для а/...</div>
<div class="t b" style="right:1124.15px;top:167px;letter-spacing:0.85px">42292</div>
<div class="t b" style="left:120px;top:167px;letter-spacing:0.85px">31764</div>
<div class="t b" style="left:163px;top:167px;letter-spacing:0.25px">CRKIT1001</div>
<div class="t b" style="left:244px;top:167px;transform-origin:0 0;transform:scaleX(0.947)">CARVILLE RACING</div>
<div class="t b" style="left:386px;top:167px;transform-origin:0 0;transform:scaleX(0.9718)">Компл. фильтров для а/м Hyundai So...</div>
<div class="t b" style="right:91.65px;top:167px;letter-spacing:0.85px;word-spacing:-1.2px">110</div>
<div class="t b red" style="right:50.65px;top:167px;letter-spacing:0.85px;word-spacing:-1.2px">100</div>
<div class="t b" style="right:1124.15px;top:182px;letter-spacing:0.85px">42300</div>
<div class="t b" style="left:120px;top:182px;letter-spacing:0.85px">31772</div>
<div class="t b" style="left:163px;top:182px;letter-spacing:0.25px">CRKIT1009</div>
<div class="t b" style="left:244px;top:182px;transform-origin:0 0;transform:scaleX(0.947)">CARVILLE RACING</div>
<div class="t b" style="left:386px;top:182px;transform-origin:0 0;transform:scaleX(0.9822)">Компл. фильтров для а/м Chery Tigg...</div>
<div class="t b" style="right:91.65px;top:182px;letter-spacing:0.85px;word-spacing:-1.2px">100</div>
<div class="t b red" style="right:50.65px;top:182px;letter-spacing:0.85px;word-spacing:-1.2px">80</div>
<div class="t b" style="right:1124.15px;top:197px;letter-spacing:0.85px">55590</div>
<div class="t b" style="left:120px;top:197px;letter-spacing:0.85px">31742</div>
<div class="t b" style="left:163px;top:197px;letter-spacing:0.25px">AHPM001</div>
<div class="t b" style="left:244px;top:197px;transform-origin:0 0;transform:scaleX(0.986)">AIRLINE</div>
<div class="t b" style="left:386px;top:197px;transform-origin:0 0;transform:scaleX(0.9756)">Набор Сигналы+Перчатки (звуковые...</div>
<div class="t b" style="right:133.65px;top:197px;letter-spacing:0.85px;word-spacing:-1.2px">1</div>
<div class="t b" style="right:91.65px;top:197px;letter-spacing:0.85px;word-spacing:-1.2px">29</div>
<div class="t b" style="right:1124.15px;top:212px;letter-spacing:0.85px">36425</div>
<div class="t b" style="left:120px;top:212px;letter-spacing:0.85px">31950</div>
<div class="t b" style="left:163px;top:212px;letter-spacing:0.25px">FR 0704</div>
<div class="t b" style="left:244px;top:212px;transform-origin:0 0;transform:scaleX(1.03)">TRIALLI</div>
<div class="t b" style="left:386px;top:212px;transform-origin:0 0;transform:scaleX(0.9888)">Сцепление в сборе для с/т МТЗ 320 (...</div>
<div class="t b" style="right:393.65px;top:212px;letter-spacing:0.85px;word-spacing:-1.2px">5</div>
<div class="t b" style="right:133.65px;top:212px;letter-spacing:0.85px;word-spacing:-1.2px">1</div>
<div class="t b" style="right:91.65px;top:212px;letter-spacing:0.85px;word-spacing:-1.2px">35</div>
<div class="t b" style="right:1124.15px;top:227px;letter-spacing:0.85px">32286</div>
<div class="t b" style="left:120px;top:227px;letter-spacing:0.85px">31838</div>
<div class="t b" style="left:163px;top:227px;letter-spacing:0.25px">LGS 0017</div>
<div class="t b" style="left:244px;top:227px;transform-origin:0 0;transform:scaleX(0.935)">LUZAR</div>
<div class="t b" style="left:386px;top:227px;transform-origin:0 0;transform:scaleX(0.9806)">Кмпл прокладок теплообмен. для а/...</div>
<div class="t b" style="right:393.65px;top:227px;letter-spacing:0.85px;word-spacing:-1.2px">7</div>
<div class="t b" style="right:133.65px;top:227px;letter-spacing:0.85px;word-spacing:-1.2px">43</div>
<div class="t b" style="right:91.65px;top:227px;letter-spacing:0.85px;word-spacing:-1.2px">1 400</div>
<div class="t b" style="right:50.65px;top:227px;letter-spacing:0.85px;word-spacing:-1.2px">300</div>
<div class="t b" style="right:1124.15px;top:242px;letter-spacing:0.85px">47084</div>
<div class="t b" style="left:120px;top:242px;letter-spacing:0.85px">31923</div>
<div class="t b" style="left:163px;top:242px;letter-spacing:0.25px">BK 0951s</div>
<div class="t b" style="left:244px;top:242px;transform-origin:0 0;transform:scaleX(1.03)">TRIALLI</div>
<div class="t b" style="left:386px;top:242px;transform-origin:0 0;transform:scaleX(0.9740)">Комплект торм. дисков и колодок дл...</div>
<div class="t b" style="right:393.65px;top:242px;letter-spacing:0.85px;word-spacing:-1.2px">8</div>
<div class="t b" style="right:133.65px;top:242px;letter-spacing:0.85px;word-spacing:-1.2px">4</div>
<div class="t b red" style="right:91.65px;top:242px;letter-spacing:0.85px;word-spacing:-1.2px">30</div>
<div class="t b red" style="right:50.65px;top:242px;letter-spacing:0.85px;word-spacing:-1.2px">20</div>
<div class="t b" style="right:1124.15px;top:257px;letter-spacing:0.85px">47078</div>
<div class="t b" style="left:120px;top:257px;letter-spacing:0.85px">31917</div>
<div class="t b" style="left:163px;top:257px;letter-spacing:0.25px">BK 0841s</div>
<div class="t b" style="left:244px;top:257px;transform-origin:0 0;transform:scaleX(1.03)">TRIALLI</div>
<div class="t b" style="left:386px;top:257px;transform-origin:0 0;transform:scaleX(0.9740)">Комплект торм. дисков и колодок дл...</div>
<div class="t b" style="right:393.65px;top:257px;letter-spacing:0.85px;word-spacing:-1.2px">9</div>
<div class="t b" style="right:133.65px;top:257px;letter-spacing:0.85px;word-spacing:-1.2px">5</div>
<div class="t b red" style="right:91.65px;top:257px;letter-spacing:0.85px;word-spacing:-1.2px">30</div>
<div class="t b" style="right:1124.15px;top:272px;letter-spacing:0.85px">42633</div>
<div class="t b" style="left:120px;top:272px;letter-spacing:0.85px">31973</div>
<div class="t b" style="left:163px;top:272px;letter-spacing:0.25px">GD 1008</div>
<div class="t b" style="left:244px;top:272px;transform-origin:0 0;transform:scaleX(1.03)">TRIALLI</div>
<div class="t b" style="left:386px;top:272px;transform-origin:0 0;transform:scaleX(1.0014)">Ремкомплект ГРМ для а/м Chery Indi...</div>
<div class="t b" style="right:393.65px;top:272px;letter-spacing:0.85px;word-spacing:-1.2px">10</div>
<div class="t b" style="right:133.65px;top:272px;letter-spacing:0.85px;word-spacing:-1.2px">4</div>
<div class="t b red" style="right:91.65px;top:272px;letter-spacing:0.85px;word-spacing:-1.2px">100</div>
<div class="t b" style="right:1124.15px;top:287px;letter-spacing:0.85px">53893</div>
<div class="t b" style="left:120px;top:287px;letter-spacing:0.85px">31892</div>
<div class="t b" style="left:163px;top:287px;letter-spacing:0.25px">LWPK 03218</div>
<div class="t b" style="left:244px;top:287px;transform-origin:0 0;transform:scaleX(0.935)">LUZAR</div>
<div class="t b" style="left:386px;top:287px;transform-origin:0 0;transform:scaleX(0.9828)">Ремкомплект привод. ремня для а/м ...</div>
<div class="t b" style="right:393.65px;top:287px;letter-spacing:0.85px;word-spacing:-1.2px">18</div>
<div class="t b" style="right:133.65px;top:287px;letter-spacing:0.85px;word-spacing:-1.2px">33</div>
<div class="t b red" style="right:91.65px;top:287px;letter-spacing:0.85px;word-spacing:-1.2px">67</div>
<div class="t b" style="right:1124.15px;top:302px;letter-spacing:0.85px">42302</div>
<div class="t b" style="left:120px;top:302px;letter-spacing:0.85px">31774</div>
<div class="t b" style="left:163px;top:302px;letter-spacing:0.25px">CRKIT1011</div>
<div class="t b" style="left:244px;top:302px;transform-origin:0 0;transform:scaleX(0.947)">CARVILLE RACING</div>
<div class="t b" style="left:386px;top:302px;transform-origin:0 0;transform:scaleX(0.9813)">Компл. фильтров для а/м Renault Du...</div>
<div class="t b" style="right:393.65px;top:302px;letter-spacing:0.85px;word-spacing:-1.2px">20</div>
<div class="t b" style="right:133.65px;top:302px;letter-spacing:0.85px;word-spacing:-1.2px">25</div>
<div class="t b" style="right:91.65px;top:302px;letter-spacing:0.85px;word-spacing:-1.2px">10</div>
<div class="t b red" style="right:50.65px;top:302px;letter-spacing:0.85px;word-spacing:-1.2px">10</div>
<div class="t b" style="right:1124.15px;top:317px;letter-spacing:0.85px">37137</div>
<div class="t b" style="left:120px;top:317px;letter-spacing:0.85px">31951</div>
<div class="t b" style="left:163px;top:317px;letter-spacing:0.25px">FR 1016</div>
<div class="t b" style="left:244px;top:317px;transform-origin:0 0;transform:scaleX(1.03)">TRIALLI</div>
<div class="t b" style="left:386px;top:317px;transform-origin:0 0;transform:scaleX(0.9587)">Сцепление в сборе для а/м Ford Focu...</div>
<div class="t b" style="right:393.65px;top:317px;letter-spacing:0.85px;word-spacing:-1.2px">22</div>
<div class="t b" style="right:133.65px;top:317px;letter-spacing:0.85px;word-spacing:-1.2px">5</div>
<div class="t b" style="right:91.65px;top:317px;letter-spacing:0.85px;word-spacing:-1.2px">12</div>
<div class="t b" style="right:1124.15px;top:332px;letter-spacing:0.85px">37402</div>
<div class="t b" style="left:120px;top:332px;letter-spacing:0.85px">31842</div>
<div class="t b" style="left:163px;top:332px;letter-spacing:0.25px">LGS 0026</div>
<div class="t b" style="left:244px;top:332px;transform-origin:0 0;transform:scaleX(0.935)">LUZAR</div>
<div class="t b" style="left:386px;top:332px;transform-origin:0 0;transform:scaleX(0.9635)">Кмпл для подключ. радиатора отоп. ...</div>
<div class="t b" style="right:393.65px;top:332px;letter-spacing:0.85px;word-spacing:-1.2px">27</div>
<div class="t b" style="right:133.65px;top:332px;letter-spacing:0.85px;word-spacing:-1.2px">470</div>
<div class="t b" style="right:91.65px;top:332px;letter-spacing:0.85px;word-spacing:-1.2px">5 100</div>
<div class="t b red" style="right:50.65px;top:332px;letter-spacing:0.85px;word-spacing:-1.2px">3 000</div>
<div class="t b" style="right:1124.15px;top:347px;letter-spacing:0.85px">37136</div>
<div class="t b" style="left:120px;top:347px;letter-spacing:0.85px">31948</div>
<div class="t b" style="left:163px;top:347px;letter-spacing:0.25px">FR 0508</div>
<div class="t b" style="left:244px;top:347px;transform-origin:0 0;transform:scaleX(1.03)">TRIALLI</div>
<div class="t b" style="left:386px;top:347px;transform-origin:0 0;transform:scaleX(0.9725)">Сцепление в сборе для а/м Chevrolet...</div>
<div class="t b" style="right:393.65px;top:347px;letter-spacing:0.85px;word-spacing:-1.2px">30</div>
<div class="t b" style="right:133.65px;top:347px;letter-spacing:0.85px;word-spacing:-1.2px">10</div>
<div class="t b" style="right:91.65px;top:347px;letter-spacing:0.85px;word-spacing:-1.2px">150</div>
<div class="t b" style="right:50.65px;top:347px;letter-spacing:0.85px;word-spacing:-1.2px">90</div>
<div class="t b" style="right:1124.15px;top:362px;letter-spacing:0.85px">42637</div>
<div class="t b" style="left:120px;top:362px;letter-spacing:0.85px">31983</div>
<div class="t b" style="left:163px;top:362px;letter-spacing:0.25px">GD 7710</div>
<div class="t b" style="left:244px;top:362px;transform-origin:0 0;transform:scaleX(1.03)">TRIALLI</div>
<div class="t b" style="left:386px;top:362px;transform-origin:0 0;transform:scaleX(0.9975)">Ремкомплект ГРМ для а/м Daewoo N...</div>
<div class="t b" style="right:393.65px;top:362px;letter-spacing:0.85px;word-spacing:-1.2px">30</div>
<div class="t b" style="right:133.65px;top:362px;letter-spacing:0.85px;word-spacing:-1.2px">17</div>
<div class="t b" style="right:1124.15px;top:377px;letter-spacing:0.85px">47079</div>
<div class="t b" style="left:120px;top:377px;letter-spacing:0.85px">31918</div>
<div class="t b" style="left:163px;top:377px;letter-spacing:0.25px">BK 0842s</div>
<div class="t b" style="left:244px;top:377px;transform-origin:0 0;transform:scaleX(1.03)">TRIALLI</div>
<div class="t b" style="left:386px;top:377px;transform-origin:0 0;transform:scaleX(0.9740)">Комплект торм. дисков и колодок дл...</div>
<div class="t b" style="right:393.65px;top:377px;letter-spacing:0.85px;word-spacing:-1.2px">30</div>
<div class="t b" style="right:133.65px;top:377px;letter-spacing:0.85px;word-spacing:-1.2px">9</div>
<div class="t b red" style="right:91.65px;top:377px;letter-spacing:0.85px;word-spacing:-1.2px">20</div>
<div class="t b red" style="right:50.65px;top:377px;letter-spacing:0.85px;word-spacing:-1.2px">10</div>
<div class="t b" style="right:1124.15px;top:392px;letter-spacing:0.85px">15533</div>
<div class="t b" style="left:120px;top:392px;letter-spacing:0.85px">31880</div>
<div class="t b" style="left:163px;top:392px;letter-spacing:0.25px">LTS 104</div>
<div class="t b" style="left:244px;top:392px;transform-origin:0 0;transform:scaleX(0.935)">LUZAR</div>
<div class="t b" style="left:386px;top:392px;transform-origin:0 0;transform:scaleX(1.0277)">Термопломба для а/м 104ºC (LTS 10...</div>
<div class="t b" style="right:393.65px;top:392px;letter-spacing:0.85px;word-spacing:-1.2px">35</div>
<div class="t b" style="right:133.65px;top:392px;letter-spacing:0.85px;word-spacing:-1.2px">2 427</div>
<div class="t b" style="right:50.65px;top:392px;letter-spacing:0.85px;word-spacing:-1.2px">5 800</div>
<div class="t b" style="right:1124.15px;top:407px;letter-spacing:0.85px">42298</div>
<div class="t b" style="left:120px;top:407px;letter-spacing:0.85px">31770</div>
<div class="t b" style="left:163px;top:407px;letter-spacing:0.25px">CRKIT1007</div>
<div class="t b" style="left:244px;top:407px;transform-origin:0 0;transform:scaleX(0.947)">CARVILLE RACING</div>
<div class="t b" style="left:386px;top:407px;transform-origin:0 0;transform:scaleX(0.9710)">Компл. фильтров для а/м VAG Polo S...</div>
<div class="t b" style="right:393.65px;top:407px;letter-spacing:0.85px;word-spacing:-1.2px">38</div>
<div class="t b" style="right:133.65px;top:407px;letter-spacing:0.85px;word-spacing:-1.2px">18</div>
<div class="t b" style="right:91.65px;top:407px;letter-spacing:0.85px;word-spacing:-1.2px">100</div>
<div class="t b" style="right:1124.15px;top:422px;letter-spacing:0.85px">47089</div>
<div class="t b" style="left:120px;top:422px;letter-spacing:0.85px">31928</div>
<div class="t b" style="left:163px;top:422px;letter-spacing:0.25px">BK 131</div>
<div class="t b" style="left:244px;top:422px;transform-origin:0 0;transform:scaleX(1.03)">TRIALLI</div>
<div class="t b" style="left:386px;top:422px;transform-origin:0 0;transform:scaleX(0.9740)">Комплект торм. дисков и колодок дл...</div>
<div class="t b" style="right:393.65px;top:422px;letter-spacing:0.85px;word-spacing:-1.2px">43</div>
<div class="t b" style="right:133.65px;top:422px;letter-spacing:0.85px;word-spacing:-1.2px">11</div>
<div class="t b red" style="right:50.65px;top:422px;letter-spacing:0.85px;word-spacing:-1.2px">10</div>
<div class="t b" style="right:1124.15px;top:437px;letter-spacing:0.85px">33124</div>
<div class="t b" style="left:120px;top:437px;letter-spacing:0.85px">31878</div>
<div class="t b" style="left:163px;top:437px;letter-spacing:0.25px">LRK 1840</div>
<div class="t b" style="left:244px;top:437px;transform-origin:0 0;transform:scaleX(0.935)">LUZAR</div>
<div class="t b" style="left:386px;top:437px;transform-origin:0 0;transform:scaleX(0.9759)">Блок охл. (радиатор+конденсор+вен...</div>
<div class="t b" style="right:393.65px;top:437px;letter-spacing:0.85px;word-spacing:-1.2px">45</div>
<div class="t b" style="right:133.65px;top:437px;letter-spacing:0.85px;word-spacing:-1.2px">5</div>
<div class="t b" style="right:91.65px;top:437px;letter-spacing:0.85px;word-spacing:-1.2px">2</div>
<div class="t b" style="right:1124.15px;top:452px;letter-spacing:0.85px">47106</div>
<div class="t b" style="left:120px;top:452px;letter-spacing:0.85px">31945</div>
<div class="t b" style="left:163px;top:452px;letter-spacing:0.25px">BK 442</div>
<div class="t b" style="left:244px;top:452px;transform-origin:0 0;transform:scaleX(1.03)">TRIALLI</div>
<div class="t b" style="left:386px;top:452px;transform-origin:0 0;transform:scaleX(0.9740)">Комплект торм. дисков и колодок дл...</div>
<div class="t b" style="right:393.65px;top:452px;letter-spacing:0.85px;word-spacing:-1.2px">50</div>
<div class="t b" style="right:133.65px;top:452px;letter-spacing:0.85px;word-spacing:-1.2px">15</div>
<div class="t b red" style="right:50.65px;top:452px;letter-spacing:0.85px;word-spacing:-1.2px">20</div>
<div class="ab" style="left:1205px;top:72px;width:17px;height:395px;background:#f0f0f0"></div>
<div class="ab" style="left:1205px;top:89px;width:15px;height:61px;background:#cdcdcd"></div>
<svg class="ab" style="left:1208px;top:77px" width="9" height="8" viewBox="0 0 9 8"><path d="M1.2 6 L4.5 2.3 L7.8 6" stroke="#555" stroke-width="2.1" fill="none"/></svg>
<svg class="ab" style="left:1208px;top:455px" width="9" height="8" viewBox="0 0 9 8"><path d="M1.2 2 L4.5 5.7 L7.8 2" stroke="#555" stroke-width="2.1" fill="none"/></svg>
<div class="ab" style="left:0;top:467px;width:1222px;height:18px;background:#f0f0f0"></div>
<div class="ab" style="left:16px;top:468px;width:667px;height:15px;background:#cdcdcd"></div>
<svg class="ab" style="left:3px;top:472px" width="8" height="9" viewBox="0 0 8 9"><path d="M6 1.2 L2.3 4.5 L6 7.8" stroke="#555" stroke-width="2.1" fill="none"/></svg>
<svg class="ab" style="left:1191px;top:472px" width="8" height="9" viewBox="0 0 8 9"><path d="M2 1.2 L5.7 4.5 L2 7.8" stroke="#555" stroke-width="2.1" fill="none"/></svg>
<div class="ab" style="left:1216px;top:474px;width:2px;height:2px;background:#bdbdbd"></div>
<div class="ab" style="left:1213px;top:477px;width:2px;height:2px;background:#bdbdbd"></div>
<div class="ab" style="left:1216px;top:477px;width:2px;height:2px;background:#bdbdbd"></div>
<div class="ab" style="left:1210px;top:480px;width:2px;height:2px;background:#bdbdbd"></div>
<div class="ab" style="left:1213px;top:480px;width:2px;height:2px;background:#bdbdbd"></div>
<div class="ab" style="left:1216px;top:480px;width:2px;height:2px;background:#bdbdbd"></div>
</body></html>
